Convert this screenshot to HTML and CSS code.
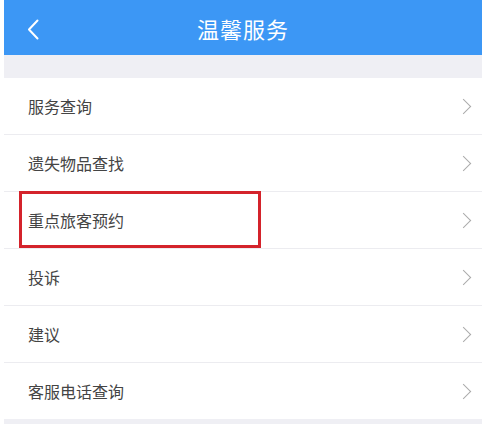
FILE: index.html
```html
<!DOCTYPE html>
<html lang="zh-CN">
<head>
    <meta charset="UTF-8">
    <meta name="viewport" content="width=device-width, initial-scale=1.0">
    <title>温馨服务</title>
    <link rel="stylesheet" href="styles.css">
</head>
<body>
    <div class="screen">
        <header class="topbar">
            <svg class="back" width="12" height="21" viewBox="0 0 12 21">
                <path d="M10.5 1.5 L2 10.5 L10.5 19.5" fill="none" stroke="#fff" stroke-width="2" stroke-linecap="round" stroke-linejoin="round"/>
            </svg>
            <h1>温馨服务</h1>
        </header>
        <div class="gap"></div>
        <ul class="menu">
            <li class="item"><span>服务查询</span><i class="chev"></i></li>
            <li class="item"><span>遗失物品查找</span><i class="chev"></i></li>
            <li class="item"><span>重点旅客预约</span><i class="chev"></i></li>
            <li class="item"><span>投诉</span><i class="chev"></i></li>
            <li class="item"><span>建议</span><i class="chev"></i></li>
            <li class="item"><span>客服电话查询</span><i class="chev"></i></li>
        </ul>
        <div class="gap"></div>
        <!-- highlight mark drawn over the list -->
        <div class="mark"></div>
    </div>
</body>
</html>
```

FILE: styles.css
```css
body {
    margin: 0;
    background: #fff;
    font-family: "Noto Sans CJK SC", "Noto Sans", sans-serif;
}
.screen {
    position: relative;
    margin-left: 4px;
    width: 478px;
    height: 424px;
    overflow: hidden;
    background: #fff;
}
.topbar {
    height: 55px;
    background: #3c97f5;
    display: flex;
    align-items: center;
    justify-content: center;
    position: relative;
}
.topbar h1 {
    margin: 0;
    font-size: 22px;
    font-weight: normal;
    color: #fff;
    letter-spacing: 1px;
    line-height: 1;
    margin-top: 1px;
}
.back {
    position: absolute;
    left: 23px;
    top: 19px;
}
.gap {
    height: 23px;
    background: #efeff4;
}
.menu {
    list-style: none;
    margin: 0;
    padding: 0;
}
.item {
    height: 56px;
    border-bottom: 1px solid #ececf0;
    display: flex;
    align-items: center;
    justify-content: space-between;
    padding: 0 9px 0 24px;
    font-size: 16px;
    color: #444;
}
.item:last-child {
    border-bottom: none;
}
.chev {
    width: 10px;
    height: 10px;
    border-top: 1.5px solid #aaa;
    border-right: 1.5px solid #aaa;
    transform: rotate(45deg);
    margin-right: 4px;
}
.mark {
    position: absolute;
    left: 15px;
    top: 191px;
    width: 236px;
    height: 51px;
    border: 3px solid #d4232b;
}
```
